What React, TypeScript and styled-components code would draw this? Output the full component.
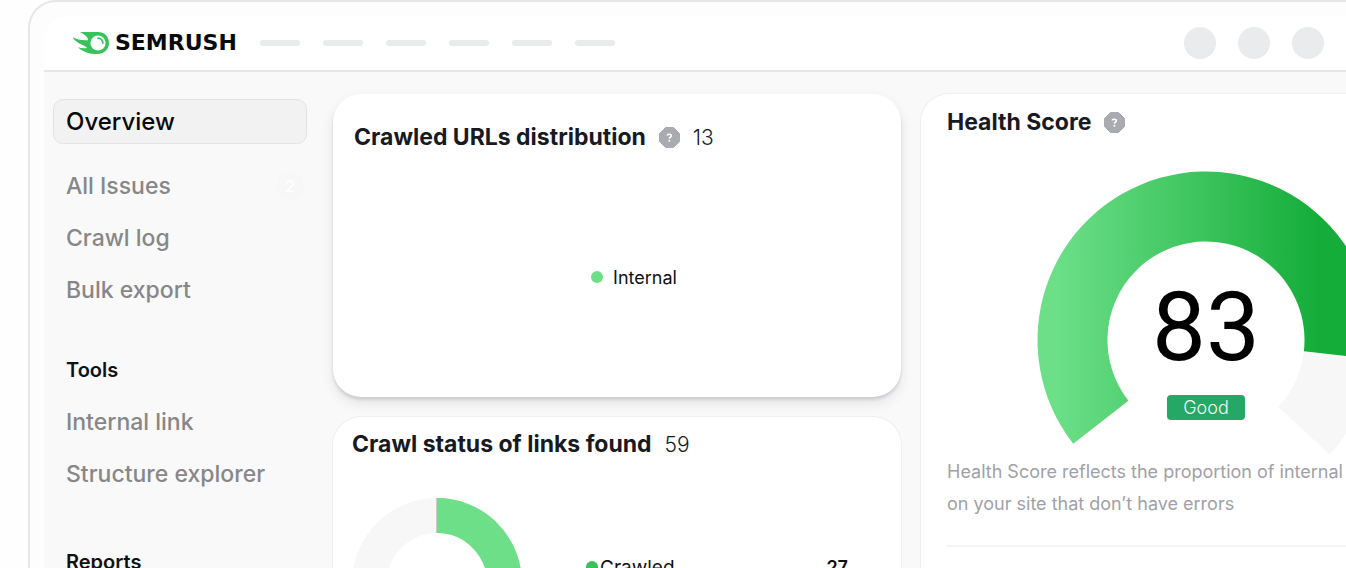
import React from "react";
import styled, { createGlobalStyle } from "styled-components";

const GlobalStyle = createGlobalStyle`
  *, *::before, *::after { box-sizing: border-box; }
  body {
    margin: 0;
    background: #fefefe;
    color: #171a22;
    font-family: Inter, "Liberation Sans", sans-serif;
  }
  h2, h3, p, ul { margin: 0; padding: 0; }
`;

const Page = styled.div`
  height: 100vh;
  overflow: hidden;
  padding-left: 28px;
`;

const Frame = styled.div`
  min-height: 100%;
  padding: 14px 0 0 14px;
  border: solid #e6e6e6;
  border-width: 2px 0 0 2px;
  border-top-left-radius: 28px;
  background: #fdfdfd;
`;

const AppShell = styled.div`
  overflow: hidden;
  border-top-left-radius: 24px;
  background: #f9f9f9;
`;

const Header = styled.header`
  display: flex;
  align-items: center;
  justify-content: space-between;
  height: 56px;
  padding: 0 22px 0 28px;
  border-bottom: 2px solid #e6e6e7;
  background: #fff;
`;

const Brand = styled.a`
  display: flex;
  align-items: center;
  gap: 5px;
  color: #0a0a0a;
  font: 700 22px/24px "DejaVu Sans", sans-serif;
  text-decoration: none;
`;

const HeaderSide = styled.div<{ $gap: number }>`
  display: flex;
  align-items: center;
  gap: ${(p) => p.$gap}px;
`;

const NavBar = styled.span`
  width: 40px;
  height: 6px;
  border-radius: 3px;
  background: #eaebed;
`;

const Avatar = styled.span`
  width: 32px;
  height: 32px;
  border-radius: 50%;
  background: #eaebed;
`;

const Body = styled.div`
  display: grid;
  grid-template-columns: 254px minmax(568px, 1fr) minmax(572px, 1fr);
  align-items: start;
  padding: 22px 20px 0 9px;
`;

const Sidebar = styled.nav`
  padding-top: 5px;
`;

const NavList = styled.ul`
  list-style: none;
`;

const NavLink = styled.a<{ $active?: boolean }>`
  display: flex;
  align-items: center;
  justify-content: space-between;
  height: ${(p) => (p.$active ? 45 : 52)}px;
  margin-bottom: ${(p) => (p.$active ? 16 : 0)}px;
  padding: 0 2px 0 12px;
  border: 1px solid ${(p) => (p.$active ? "#e2e2e2" : "transparent")};
  border-radius: 10px;
  background: ${(p) => (p.$active ? "#f2f2f2" : "transparent")};
  color: ${(p) => (p.$active ? "#0a0a0a" : "#878789")};
  font-size: ${(p) => (p.$active ? 24 : 23)}px;
  font-weight: 500;
  text-decoration: none;
`;

const NavBadge = styled.span`
  display: grid;
  place-items: center;
  width: 28px;
  height: 28px;
  border-radius: 50%;
  background: #f7f7f7;
  color: #fff;
  font-size: 16px;
`;

const NavHeading = styled.h3<{ $gap: number }>`
  margin-top: ${(p) => p.$gap}px;
  padding-left: 13px;
  color: #101114;
  font-size: 20px;
  font-weight: 600;
  line-height: 52px;
`;

const Column = styled.div`
  display: grid;
  gap: 20px;
  padding-left: 26px;
  width: calc(100% + 26px);
`;

const ScoreColumn = styled.div`
  padding-left: 46px;
  width: calc(100% + 46px);
`;

const Card = styled.section<{ $pad: string; $raised?: boolean; $height: number }>`
  display: flex;
  flex-direction: column;
  min-height: ${(p) => p.$height}px;
  padding: ${(p) => p.$pad};
  border-radius: 28px;
  background: #fff;
  box-shadow: ${(p) =>
    p.$raised
      ? "0 3px 3px rgba(20, 26, 40, 0.12), 0 6px 14px rgba(20, 26, 40, 0.09)"
      : "0 0 0 1px #efefef"};
`;

const CardHead = styled.div`
  display: flex;
  align-items: center;
  height: 32px;
`;

const CardTitle = styled.h2`
  font-size: 23px;
  font-weight: 700;
  line-height: 32px;
  white-space: nowrap;
`;

const CardCount = styled.span`
  margin-left: 13px;
  font-size: 21px;
  font-weight: 300;
`;

const HelpButton = styled.button`
  display: flex;
  margin-left: 13px;
  padding: 0;
  border: 0;
  background: none;
`;

const Legend = styled.div`
  display: flex;
  flex: 1;
  align-items: center;
  justify-content: center;
  gap: 10px;
  padding: 4px 0 0 34px;
  color: #101114;
  font-size: 18px;
`;

const Dot = styled.span<{ $color: string }>`
  width: 12px;
  height: 12px;
  border-radius: 50%;
  background: ${(p) => p.$color};
`;

const StatusRow = styled.div`
  display: flex;
  align-items: center;
  padding-top: 38px;
`;

const StatusLegend = styled.div`
  display: flex;
  flex: 1;
  align-items: center;
  gap: 2px;
  height: 24px;
  margin: 0 34px 32px 64px;
  color: #101114;
  font-size: 19px;
`;

const StatusValue = styled.strong`
  margin-left: auto;
  font-size: 18px;
  font-weight: 600;
`;

const GaugeBox = styled.div`
  display: grid;
  justify-items: center;
  padding: 33px 28px 0 0;
  & > * { grid-area: 1 / 1; }
`;

const GaugeLabel = styled.div`
  display: flex;
  flex-direction: column;
  align-items: center;
  padding-top: 100px;
`;

const Score = styled.span`
  color: #000;
  font-family: Roboto, sans-serif;
  font-size: 96px;
  line-height: 112px;
`;

const Rating = styled.span`
  margin-top: 12px;
  width: 78px;
  border-radius: 4px;
  background: #25a766;
  color: #f2fbf5;
  font-size: 18px;
  font-weight: 300;
  line-height: 25px;
  text-align: center;
`;

const Description = styled.p`
  margin: 1px 0 25px;
  color: #a0a1a8;
  font-size: 18px;
  font-weight: 400;
  line-height: 32px;
`;

const Divider = styled.hr`
  width: 100%;
  margin: 0;
  border: 0;
  border-top: 2px solid #f3f3f3;
`;

function Fireball() {
  return (
    <svg width="38" height="24" viewBox="0 0 38 24" aria-hidden="true">
      <path
        d="M8 1H26C32.500 1 37 5.500 37 12S32 23 25 23C17.500 23 11 21 6 16.200C9 17.200 12.500 17.600 15 17C14.500 14.600 4 13 0.500 6C5 8.500 11 9.800 16 9.200C16.500 6 11 2.800 8 1Z"
        fill="#39c25c"
      />
      <circle cx="26" cy="12" r="7.600" fill="#fff" />
      <path d="M26 7.200A5 5 0 0 1 30.800 12" fill="none" stroke="#39c25c" strokeWidth="1.800" strokeLinecap="round" />
    </svg>
  );
}

function Help() {
  return (
    <HelpButton type="button" aria-label="Help">
      <svg width="21" height="21" viewBox="0 0 21 21" aria-hidden="true">
        <path d="M6.500 .5H14.500L20.500 6.500V14.500L14.500 20.500H6.500L.5 14.500V6.500Z" fill="#a9abb0" stroke="#a9abb0" strokeLinejoin="round" />
        <path d="M8.400 8.600C8.400 6.700 12.300 6.700 12.300 8.700C12.300 10.200 10.400 10 10.400 11.700" fill="none" stroke="#fff" strokeWidth="1.600" />
        <circle cx="10.400" cy="13.700" r="1" fill="#fff" />
      </svg>
    </HelpButton>
  );
}

function StatusDonut() {
  return (
    <svg width="170" height="170" viewBox="0 0 170 170" role="img" aria-label="Crawl status">
      <circle cx="85" cy="85" r="67.500" fill="none" stroke="#f7f7f7" strokeWidth="35" />
      <path d="M85 17.500A67.500 67.500 0 0 1 85 152.500" fill="none" stroke="#6cdf88" strokeWidth="35" />
      <path d="M84.500 0V35" stroke="#c9cbc9" strokeWidth="1" />
    </svg>
  );
}

const point = (deg: number, r: number) => {
  const a = (deg * Math.PI) / 180;
  return `${169 + r * Math.cos(a)} ${169 + r * Math.sin(a)}`;
};

const arc = (from: number, to: number, large: number) =>
  `M${point(from, 168.5)}A168.5 168.5 0 ${large} 1 ${point(to, 168.5)}L${point(to, 98.5)}A98.5 98.5 0 ${large} 0 ${point(from, 98.5)}Z`;

function Gauge() {
  return (
    <svg width="338" height="284" viewBox="0 0 338 284" role="img" aria-label="Health score gauge">
      <defs>
        <linearGradient id="score" gradientUnits="userSpaceOnUse" x1="20" y1="0" x2="280" y2="0">
          <stop offset="0" stopColor="#6cdf88" />
          <stop offset="1" stopColor="#15ad3a" />
        </linearGradient>
      </defs>
      <path d={arc(6.5, 42.8, 0)} fill="#f7f7f7" />
      <path d={arc(142, 366.5, 1)} fill="url(#score)" />
    </svg>
  );
}

const issueLinks = [{ label: "All Issues", badge: "2" }, { label: "Crawl log" }, { label: "Bulk export" }];
const toolLinks = ["Internal link", "Structure explorer"];

export default function App() {
  return (
    <>
      <GlobalStyle />
      <Page>
        <Frame>
          <AppShell>
            <Header>
              <HeaderSide $gap={23}>
                <Brand href="#">
                  <Fireball />
                  SEMRUSH
                </Brand>
                <HeaderSide $gap={23}>
                  {[0, 1, 2, 3, 4, 5].map((i) => (
                    <NavBar key={i} />
                  ))}
                </HeaderSide>
              </HeaderSide>
              <HeaderSide $gap={22}>
                {[0, 1, 2].map((i) => (
                  <Avatar key={i} />
                ))}
              </HeaderSide>
            </Header>
            <Body>
              <Sidebar>
                <NavList>
                  <li>
                    <NavLink href="#" $active>
                      Overview
                    </NavLink>
                  </li>
                  {issueLinks.map((link) => (
                    <li key={link.label}>
                      <NavLink href="#">
                        {link.label}
                        {link.badge && <NavBadge>{link.badge}</NavBadge>}
                      </NavLink>
                    </li>
                  ))}
                </NavList>
                <NavHeading $gap={28}>Tools</NavHeading>
                <NavList>
                  {toolLinks.map((label) => (
                    <li key={label}>
                      <NavLink href="#">{label}</NavLink>
                    </li>
                  ))}
                </NavList>
                <NavHeading $gap={36}>Reports</NavHeading>
              </Sidebar>
              <Column>
                <Card $pad="27px 21px 0" $height={303} $raised>
                  <CardHead>
                    <CardTitle>Crawled URLs distribution</CardTitle>
                    <Help />
                    <CardCount>13</CardCount>
                  </CardHead>
                  <Legend>
                    <Dot $color="#6cdf88" />
                    Internal
                  </Legend>
                </Card>
                <Card $pad="11px 19px 0" $height={303}>
                  <CardHead>
                    <CardTitle>Crawl status of links found</CardTitle>
                    <CardCount>59</CardCount>
                  </CardHead>
                  <StatusRow>
                    <StatusDonut />
                    <StatusLegend>
                      <Dot $color="#39c25c" />
                      Crawled
                      <StatusValue>27</StatusValue>
                    </StatusLegend>
                  </StatusRow>
                </Card>
              </Column>
              <ScoreColumn>
                <Card $pad="12px 0 24px 26px" $height={626}>
                  <CardHead>
                    <CardTitle>Health Score</CardTitle>
                    <Help />
                  </CardHead>
                  <GaugeBox>
                    <Gauge />
                    <GaugeLabel>
                      <Score>83</Score>
                      <Rating>Good</Rating>
                    </GaugeLabel>
                  </GaugeBox>
                  <Description>
                    Health Score reflects the proportion of internal
                    <br />
                    on your site that don’t have errors
                  </Description>
                  <Divider />
                </Card>
              </ScoreColumn>
            </Body>
          </AppShell>
        </Frame>
      </Page>
    </>
  );
}
